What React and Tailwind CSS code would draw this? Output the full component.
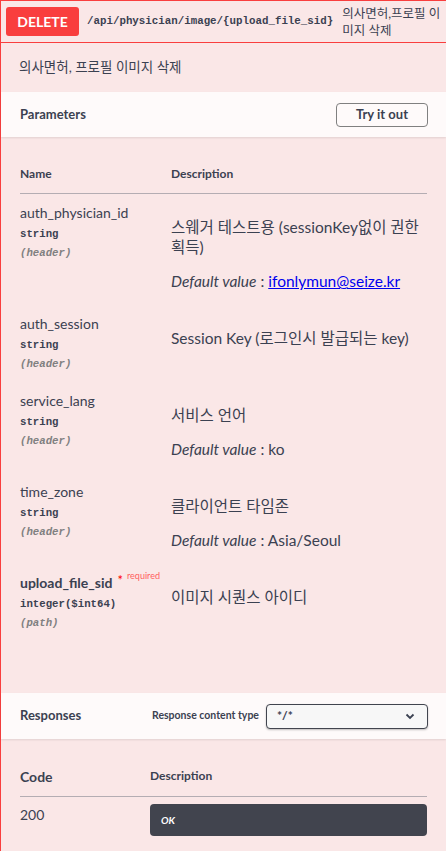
import React from "react";

const sans = { fontFamily: 'Lato, "Noto Sans CJK KR", sans-serif' };
const mono = { fontFamily: '"Liberation Mono", "DejaVu Sans Mono", monospace' };

const params = [
  {
    name: "auth_physician_id",
    type: "string",
    place: "(header)",
    desc: ["스웨거 테스트용 (sessionKey없이 권한", "획득)"],
    def: "ifonlymun@seize.kr",
    link: true,
  },
  {
    name: "auth_session",
    type: "string",
    place: "(header)",
    desc: ["Session Key (로그인시 발급되는 key)"],
  },
  {
    name: "service_lang",
    type: "string",
    place: "(header)",
    desc: ["서비스 언어"],
    def: "ko",
  },
  {
    name: "time_zone",
    type: "string",
    place: "(header)",
    desc: ["클라이언트 타임존"],
    def: "Asia/Seoul",
  },
  {
    name: "upload_file_sid",
    type: "integer($int64)",
    place: "(path)",
    desc: ["이미지 시퀀스 아이디"],
    required: true,
  },
];

const ParamRow = ({ p }) => (
  <div className="flex py-[8px]">
    <div className="w-[151px] shrink-0">
      <div className="h-[20px] flex items-center">
        <span className={`text-[14px] text-[#3b4151] ${p.required ? "font-bold" : ""}`}>{p.name}</span>
        {p.required && (
          <span className="ml-[5px] -mt-[4px] flex items-start">
            <span className="text-[#f00] text-[13px] leading-none">*</span>
            <span className="ml-[4px] text-[9px] text-[#ff6060] leading-none -mt-[3px]">required</span>
          </span>
        )}
      </div>
      <div className="h-[20px] mt-[2px] flex items-center text-[10.7px] font-bold text-[#3b4151]" style={mono}>
        {p.type}
      </div>
      <div className="h-[19px] flex items-center text-[10.7px] italic font-bold text-[#808080]" style={mono}>
        {p.place}
      </div>
    </div>
    <div className="flex-1 pt-[15px] pb-[6px] pr-[10px] text-[15.5px] text-[#3b4151] whitespace-nowrap">
      {p.desc.map((d, i) => (
        <div key={i} className="h-[20px] leading-[20px]">{d}</div>
      ))}
      {p.def && (
        <div className="h-[20px] leading-[20px] mt-[14px]">
          <i>Default value</i> :{" "}
          {p.link ? <span className="text-[#0000ee] underline">{p.def}</span> : p.def}
        </div>
      )}
    </div>
  </div>
);

export default function App() {
  return (
    <div className="w-[446px] h-[851px] overflow-hidden bg-white" style={sans}>
      <div className="border-l border-t border-[#f93e3e] bg-[#fae7e7] min-h-[851px]">
        {/* Header */}
        <div className="flex items-center h-[42px] border-b border-[#f93e3e] pl-[5px]">
          <div className="w-[73px] h-[29px] rounded-[3px] bg-[#f93e3e] flex items-center justify-center text-white text-[14px] font-bold">
            DELETE
          </div>
          <div className="ml-[8px] text-[10.8px] font-bold text-[#3b4151] whitespace-nowrap" style={mono}>
            /api/physician/image/{"{upload_file_sid}"}
          </div>
          <div className="ml-[9px] text-[12.5px] leading-[17px] text-[#3b4151]">
            <div>의사면허,프로필 이</div>
            <div>미지 삭제</div>
          </div>
        </div>

        {/* Description */}
        <div className="h-[49px] flex items-center pl-[18px] text-[13.5px] text-[#3b4151]">
          의사면허, 프로필 이미지 삭제
        </div>

        {/* Parameters bar */}
        <div className="h-[45px] bg-[#fefafa] shadow-[0_1px_2px_rgba(0,0,0,0.1)] flex items-center justify-between pl-[19px] pr-[18px]">
          <span className="text-[13px] font-bold text-[#3b4151]">Parameters</span>
          <button className="w-[92px] h-[24px] border-[1.5px] border-[#808080] rounded-[4px] bg-transparent text-[13px] font-bold text-[#3b4151]">
            Try it out
          </button>
        </div>

        {/* Parameter table */}
        <div className="px-[19px] pt-[27px] pb-[52px]">
          <div className="flex h-[19px] items-center text-[12px] font-bold text-[#3b4151]">
            <div className="w-[151px]">Name</div>
            <div>Description</div>
          </div>
          <div className="mt-[10px] h-px bg-[#b4adb3]" />
          <div>
            {params.map((p) => (
              <ParamRow key={p.name} p={p} />
            ))}
          </div>
        </div>

        {/* Responses bar */}
        <div className="h-[46px] bg-[#fefafa] shadow-[0_1px_2px_rgba(0,0,0,0.1)] flex items-center pl-[19px] pr-[18px]">
          <span className="w-[132px] text-[13px] font-bold text-[#3b4151]">Responses</span>
          <span className="text-[10.5px] font-bold text-[#3b4151] whitespace-nowrap">Response content type</span>
          <div className="ml-auto w-[162px] h-[25px] border border-[#41444e] rounded-[4px] bg-[#f7f7f7] flex items-center justify-between pl-[10px] pr-[12px] shadow-[0_1px_2px_rgba(0,0,0,0.25)]">
            <span className="text-[12px] font-bold text-[#3b4151]">*/*</span>
            <svg width="10" height="7" viewBox="0 0 10 7">
              <path d="M1.5 1.5 L5 5 L8.5 1.5" fill="none" stroke="#3b4151" strokeWidth="1.8" />
            </svg>
          </div>
        </div>

        {/* Responses table */}
        <div className="px-[19px] pt-[27px]">
          <div className="flex h-[20px] items-center text-[#3b4151] font-bold">
            <div className="w-[130px] text-[14px]">Code</div>
            <div className="text-[12px]">Description</div>
          </div>
          <div className="mt-[10px] h-px bg-[#b4adb3]" />
          <div className="flex pt-[8px]">
            <div className="w-[130px] text-[14px] text-[#3b4151] leading-[20px]">200</div>
            <div className="flex-1 h-[32px] rounded-[4px] bg-[#41444e] flex items-center pl-[11px] text-white text-[10px] italic font-bold -mt-[1px]">
              OK
            </div>
          </div>
        </div>
      </div>
    </div>
  );
}
